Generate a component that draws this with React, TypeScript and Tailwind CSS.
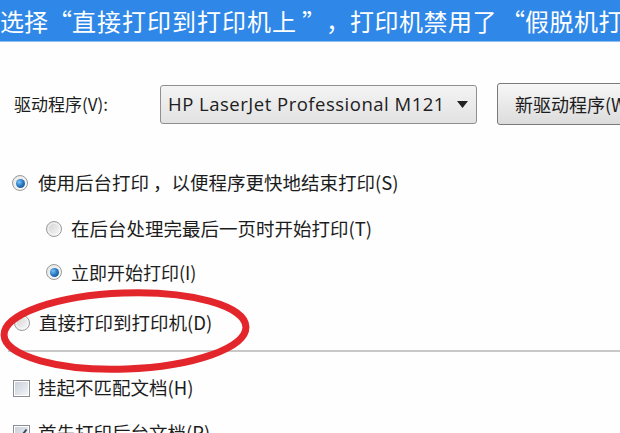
import React from "react";

const font = { fontFamily: '"Noto Sans CJK SC", "Noto Sans", sans-serif' };

function Radio({ checked }: { checked?: boolean }) {
  return (
    <span className="relative inline-flex h-[16px] w-[16px] shrink-0 items-center justify-center rounded-full border border-[#9a9a9a] bg-gradient-to-br from-[#e6e6e6] to-[#fbfbfb]">
      {checked ? (
        <span className="h-[9px] w-[9px] rounded-full bg-[radial-gradient(circle_at_35%_35%,#7fc3f0_0%,#2a7cc8_45%,#0e3f73_100%)]" />
      ) : (
        <span className="h-[10px] w-[10px] rounded-full bg-gradient-to-br from-[#d6d6d6] to-[#f4f4f4]" />
      )}
    </span>
  );
}

function Check({ checked }: { checked?: boolean }) {
  return (
    <span className="inline-flex h-[17px] w-[17px] shrink-0 items-center justify-center border border-[#8a8e94] bg-white">
      <span className="flex h-[13px] w-[13px] items-center justify-center bg-gradient-to-br from-[#c9d0da] to-[#f2f4f7]">
        {checked ? (
          <svg width="12" height="12" viewBox="0 0 12 12">
            <path d="M2 6.5 L5 9.5 L10.5 2.5" fill="none" stroke="#3b4a5e" strokeWidth="2" />
          </svg>
        ) : null}
      </span>
    </span>
  );
}

export default function App() {
  return (
    <div className="relative h-[433px] w-[620px] overflow-hidden bg-[#fefefe] text-[#1c1c1c]" style={font}>
      <div className="flex h-[42px] items-center overflow-hidden whitespace-nowrap border-b border-[#8cc0f2] bg-[#2f88e8] text-[24px] text-white">
        <span className="shrink-0">选择</span>
        <span className="shrink-0">“</span>
        <span className="shrink-0 tracking-[1px]">直接打印到打印机上</span>
        <span className="ml-[5px] shrink-0">”</span>
        <span className="shrink-0">，</span>
        <span className="shrink-0 tracking-[0.5px]">打印机禁用了</span>
        <span className="ml-[4px] shrink-0">“</span>
        <span className="shrink-0 tracking-[0.5px]">假脱机打印”功能</span>
      </div>

      <div className="mt-[41px] flex h-[42px] items-center whitespace-nowrap">
        <span className="w-[160px] shrink-0 pl-[14px] text-[17px]">驱动程序(V):</span>
        <div className="flex h-[39px] w-[317px] shrink-0 items-center justify-between rounded-[3px] border border-[#8f8f8f] bg-gradient-to-b from-[#f4f4f4] to-[#e2e2e2] pl-[7px] pr-[8px]">
          <span className="text-[18.5px] tracking-[0.5px] text-[#202020]" style={{ fontFamily: '"Open Sans", "Liberation Sans", sans-serif' }}>
            HP LaserJet Professional M121
          </span>
          <svg width="11" height="7" viewBox="0 0 11 7">
            <path d="M0 0 H11 L5.5 7 Z" fill="#202020" />
          </svg>
        </div>
        <div className="ml-[20px] flex h-[42px] w-[150px] shrink-0 items-center rounded-[3px] border border-[#7a7a7a] bg-gradient-to-b from-[#f7f7f7] to-[#dcdcdc] pl-[17px] text-[18px]">
          新驱动程序(W)...
        </div>
      </div>

      <div className="mt-[46px] flex h-[24px] items-center gap-[10px] pl-[12px] text-[18.5px] whitespace-nowrap">
        <Radio checked />
        <span className="flex items-center">
          <span>使用后台打印</span>
          <span className="ml-[4px]">，</span>
          <span>以便程序更快地结束打印(S)</span>
        </span>
      </div>
      <div className="mt-[22px] flex h-[24px] items-center gap-[9px] pl-[46px] text-[18.5px] whitespace-nowrap">
        <Radio />
        <span>在后台处理完最后一页时开始打印(T)</span>
      </div>
      <div className="mt-[19px] flex h-[24px] items-center gap-[9px] pl-[46px] text-[18px] whitespace-nowrap">
        <Radio checked />
        <span>立即开始打印(I)</span>
      </div>
      <div className="mt-[27px] flex h-[24px] items-center gap-[9px] pl-[14px] text-[18.5px] whitespace-nowrap">
        <Radio />
        <span>直接打印到打印机(D)</span>
      </div>

      <div className="ml-[8px] mt-[15px] h-[2px] bg-[#c8c8c8]" />

      <div className="mt-[24px] flex h-[24px] items-center gap-[8px] pl-[13px] text-[18.5px] whitespace-nowrap">
        <Check />
        <span>挂起不匹配文档(H)</span>
      </div>
      <div className="mt-[21px] flex h-[24px] items-center gap-[8px] pl-[13px] text-[18.5px] whitespace-nowrap">
        <Check checked />
        <span>首先打印后台文档(P)</span>
      </div>

      <svg className="pointer-events-none absolute left-0 top-[286px]" width="260" height="92" viewBox="0 0 260 92">
        <ellipse cx="125" cy="45" rx="121" ry="38" fill="none" stroke="#e3262b" strokeWidth="7" transform="rotate(-2 125 45)" />
      </svg>
    </div>
  );
}
